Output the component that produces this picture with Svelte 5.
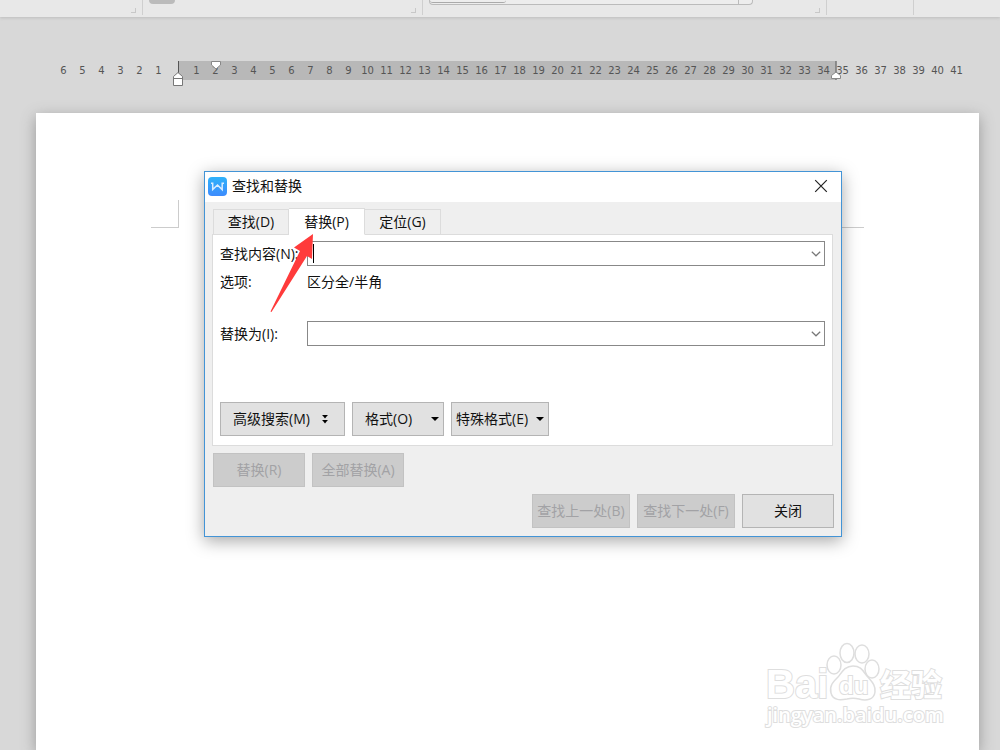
<!-- script -->
<script lang="ts">
  /* constants */
  const rulerBefore: number[] = [6, 5, 4, 3, 2, 1]
  const rulerAfter: number[] = Array.from({ length: 41 }, (_, i) => i + 1)
  const tabs: { id: string, label: string }[] = [
    { id: 'find', label: '查找(D)' },
    { id: 'replace', label: '替换(P)' },
    { id: 'goto', label: '定位(G)' },
  ]
  /* state */
  let activeTab: string = $state('replace')
  let findText: string = $state('')
  let replaceText: string = $state('')
</script>

<!-- snippets -->
{#snippet chevron()}
  <svg width="10" height="6" viewBox="0 0 10 6" aria-hidden="true">
    <path d="M0.8 0.8 L5 4.8 L9.2 0.8" fill="none" stroke="#777" stroke-width="1.2" />
  </svg>
{/snippet}

{#snippet caretDown()}
  <svg width="8" height="4" viewBox="0 0 8 4" aria-hidden="true">
    <path d="M0 0 H8 L4 4 Z" fill="#000" />
  </svg>
{/snippet}

<!-- template -->
<div class="app">
  <header class="ribbon">
    <div class="group"><span class="launcher"></span></div>
    <div class="group">
      <span class="tool"></span>
      <span class="launcher"></span>
    </div>
    <div class="group">
      <div class="gallery">
        <span class="gallery-item"></span>
        <span class="gallery-more"></span>
      </div>
      <span class="launcher"></span>
    </div>
    <div class="group"></div>
    <div class="group"></div>
  </header>

  <main>
    <div class="ruler">
      <div class="ruler-band"></div>
      <div class="ticks">
        {#each rulerBefore as n}
        <span>{n}</span>
        {/each}
        <span></span>
        {#each rulerAfter as n}
        <span>{n}</span>
        {/each}
      </div>
      <svg class="marker indent-left" width="12" height="26" viewBox="0 0 12 26" aria-hidden="true">
        <path d="M6.5 0 V13" stroke="#555" />
        <path d="M1.5 24.5 V15.5 L6 11.5 L10.5 15.5 V24.5 Z M1.5 17.5 H10.5" fill="#fff" stroke="#777" />
      </svg>
      <svg class="marker indent-first" width="12" height="9" viewBox="0 0 12 9" aria-hidden="true">
        <path d="M1.5 0.5 H10.5 V4 L6 8 L1.5 4 Z" fill="#fff" stroke="#888" />
      </svg>
      <svg class="marker indent-right" width="12" height="20" viewBox="0 0 12 20" aria-hidden="true">
        <path d="M6 0 V19" stroke="#777" stroke-width="1.500" />
        <path d="M1.5 17.5 V14.5 L6 11 L10.5 14.5 V17.5 Z" fill="#fff" stroke="#888" />
      </svg>
    </div>

    <article class="page">
      <span class="crop crop-left"></span>
      <span class="crop crop-right"></span>
    </article>
  </main>

  <section class="dialog" role="dialog" aria-labelledby="dialog-title">
    <div class="title-bar">
      <svg width="19" height="19" viewBox="0 0 19 19" aria-hidden="true">
        <defs>
          <linearGradient id="logo" x1="0" y1="0" x2="0" y2="1">
            <stop offset="0" stop-color="#2fb2fa" />
            <stop offset="1" stop-color="#3d8bfd" />
          </linearGradient>
        </defs>
        <rect width="19" height="19" rx="4" fill="url(#logo)" />
        <path d="M3 6.3 H4.7 V12.6 L9.5 8 L14.2 12.6 V6.3 H16" fill="none" stroke="#d8edff" stroke-width="1.500" />
      </svg>
      <h1 id="dialog-title">查找和替换</h1>
      <button class="close" aria-label="关闭窗口">
        <svg width="14" height="14" viewBox="0 0 14 14" aria-hidden="true">
          <path d="M1.2 1.2 L12.8 12.8 M12.8 1.2 L1.2 12.8" stroke="#222" stroke-width="1.2" />
        </svg>
      </button>
    </div>

    <div class="dialog-body">
      <div class="tabs" role="tablist">
        {#each tabs as tab}
        <button
          class="tab"
          class:active={activeTab === tab.id}
          role="tab"
          aria-selected={activeTab === tab.id}
          onclick={() => activeTab = tab.id}
        >{tab.label}</button>
        {/each}
      </div>

      <div class="panel">
        <div class="field">
          <label for="find-text">查找内容(N):</label>
          <div class="combo">
            <input id="find-text" type="text" bind:value={findText} />
            {#if findText === ''}
            <span class="text-cursor"></span>
            {/if}
            <button aria-label="查找记录">{@render chevron()}</button>
          </div>
        </div>
        <div class="field options">
          <span>选项:</span>
          <span>区分全/半角</span>
        </div>
        <div class="field replace-with">
          <label for="replace-text">替换为(I):</label>
          <div class="combo">
            <input id="replace-text" type="text" bind:value={replaceText} />
            <button aria-label="替换记录">{@render chevron()}</button>
          </div>
        </div>
        <div class="row tools">
          <button class="btn advanced">
            高级搜索(M)
            <svg width="6" height="9" viewBox="0 0 6 9" aria-hidden="true">
              <path d="M0.5 0.5 H5.5 M0.5 5.5 H5.5" stroke="#000" />
              <path d="M1 1 H5 L3 3.5 Z M1 6 H5 L3 8.5 Z" fill="#000" />
            </svg>
          </button>
          <button class="btn format">格式(O) {@render caretDown()}</button>
          <button class="btn wide special">特殊格式(E) {@render caretDown()}</button>
        </div>
      </div>

      <div class="row actions">
        <button class="btn" disabled>替换(R)</button>
        <button class="btn" disabled>全部替换(A)</button>
      </div>
      <div class="row actions end">
        <button class="btn wide" disabled>查找上一处(B)</button>
        <button class="btn wide" disabled>查找下一处(F)</button>
        <button class="btn">关闭</button>
      </div>
    </div>

    <svg class="pointer" width="44" height="80" viewBox="0 0 44 80" aria-hidden="true">
      <path d="M43 1 L42 26 L37 23 L1.5 79 L0.5 78.5 L30 18 L24 14.5 Z" fill="#ff3b3b" />
    </svg>
  </section>

  <svg class="watermark" width="190" height="96" viewBox="0 0 190 96" aria-label="Baidu 经验">
    <g fill="#fff" stroke="#dedede" stroke-width="1.500">
      <ellipse cx="72" cy="25" rx="7" ry="9" />
      <ellipse cx="85" cy="13" rx="7" ry="9.500" />
      <ellipse cx="100" cy="14" rx="7" ry="9" />
      <ellipse cx="110" cy="29" rx="7" ry="9" />
      <path d="M91 26 C83 26 80 32 76 37 C71 42 67 46 69 53 C71 61 79 60 85 59 C89 58 93 58 97 59 C104 61 112 60 113 52 C114 45 109 41 105 36 C101 31 99 26 91 26 Z" />
    </g>
    <text class="mark brand" x="4" y="58">Bai</text>
    <text class="mark du" x="77" y="54">du</text>
    <text class="mark cjk" x="118" y="56">经验</text>
    <text class="mark url" x="5" y="82">jingyan.baidu.com</text>
  </svg>
</div>

<!-- style -->
<style>
  :global(body) {
    /* margins */
    margin: 0;
    /* color */
    background-color: #d8d8d8;
  }
  .app {
    /* size */
    min-height: 100vh;
    box-sizing: border-box;
    /* position */
    position: relative;
    overflow: hidden;
    /* flex */
    display: flex;
    flex-direction: column;
    /* fonts */
    font-family: "Open Sans", "Noto Sans CJK SC", sans-serif;
    font-size: 14px;
    line-height: 20px;
    /* color */
    color: #111;
  }
  .ribbon {
    /* size */
    height: 17px;
    /* grid */
    display: grid;
    grid-template-columns: 143px 280px 404px 87px 1fr;
    /* color */
    background-color: #e8e8e8;
    box-shadow: 0 1px 3px #bdbdbd;
  }
  .group {
    /* size */
    height: 15px;
    box-sizing: border-box;
    /* flex */
    display: flex;
    align-items: flex-start;
    /* margins */
    padding: 0 6px 2px;
    /* color */
    border-right: 1px solid #cfcfcf;
  }
  .group:last-child {
    border-right: none;
  }
  .launcher {
    /* size */
    width: 4px;
    height: 4px;
    /* flex */
    margin-left: auto;
    align-self: flex-end;
    /* color */
    border-right: 1px solid #c8c8c8;
    border-bottom: 1px solid #c8c8c8;
  }
  .tool {
    /* size */
    width: 26px;
    height: 4px;
    /* color */
    background-color: #bbb;
    border-radius: 0 0 4px 4px;
  }
  .gallery {
    /* size */
    width: 324px;
    height: 5px;
    box-sizing: border-box;
    /* flex */
    display: flex;
    justify-content: space-between;
    /* color */
    background-color: #ededed;
    border: 1px solid #bbb;
    border-top: none;
    border-radius: 0 0 4px 4px;
  }
  .gallery-item {
    /* size */
    width: 76px;
    height: 2px;
    /* color */
    border-bottom: 1px solid #aaa;
    border-radius: 0 0 3px 3px;
  }
  .gallery-more {
    /* size */
    width: 13px;
    /* color */
    border-left: 1px solid #bbb;
  }
  main {
    /* flex */
    flex: 1;
    display: flex;
    flex-direction: column;
    /* margins */
    padding-top: 44px;
  }
  .ruler {
    /* size */
    height: 19px;
    /* position */
    position: relative;
    /* margins */
    margin-left: 54px;
  }
  .ruler-band {
    /* size */
    width: 657px;
    height: 19px;
    /* position */
    position: absolute;
    left: 125px;
    /* color */
    background-color: #b8b8b8;
  }
  .ticks {
    /* position */
    position: relative;
    /* grid */
    display: grid;
    grid-auto-flow: column;
    grid-auto-columns: 19px;
    /* fonts */
    font-family: "DejaVu Sans", sans-serif;
    font-size: 10px;
    line-height: 19px;
    text-align: center;
    /* color */
    color: #555;
  }
  .marker {
    position: absolute;
    top: 0;
  }
  .indent-left {
    left: 118px;
  }
  .indent-first {
    left: 156px;
  }
  .indent-right {
    left: 776px;
  }
  .page {
    /* flex */
    flex: 1;
    display: flex;
    justify-content: space-between;
    align-items: flex-start;
    /* margins */
    margin: 33px 21px 0 36px;
    padding: 87px 115px 0;
    /* color */
    background-color: #fff;
    box-shadow: 0 4px 14px #999;
  }
  .crop {
    /* size */
    width: 27px;
    height: 27px;
    /* color */
    border-bottom: 1px solid #ccc;
  }
  .crop-left {
    border-right: 1px solid #ccc;
  }
  .crop-right {
    border-left: 1px solid #ccc;
  }
  .dialog {
    /* size */
    width: 638px;
    box-sizing: border-box;
    /* position */
    position: absolute;
    left: 204px;
    top: 171px;
    /* color */
    background-color: #efefef;
    border: 1px solid #4394d6;
    box-shadow: 0 4px 16px rgba(0, 0, 0, 0.35);
  }
  .title-bar {
    /* size */
    height: 28px;
    /* flex */
    display: flex;
    align-items: center;
    column-gap: 5px;
    /* margins */
    padding: 0 3px 2px;
    /* color */
    background-color: #fff;
  }
  h1 {
    /* margins */
    margin: 0;
    /* fonts */
    font-size: 14px;
    font-weight: 400;
  }
  button {
    /* margins */
    margin: 0;
    padding: 0;
    /* fonts */
    font: inherit;
    color: inherit;
  }
  .close {
    /* size */
    width: 34px;
    height: 28px;
    /* flex */
    display: flex;
    justify-content: center;
    align-items: center;
    margin-left: auto;
    /* color */
    background: none;
    border: none;
  }
  .dialog-body {
    padding: 6px 7px 8px;
  }
  .tabs {
    /* flex */
    display: flex;
    align-items: flex-end;
    /* margins */
    padding-left: 1px;
  }
  .tab {
    /* size */
    width: 76px;
    height: 26px;
    /* color */
    background-color: #efefef;
    border: 1px solid #dcdcdc;
    border-left-width: 0;
  }
  .tab:first-child {
    border-left-width: 1px;
  }
  .tab.active {
    /* size */
    height: 27px;
    /* position */
    position: relative;
    /* color */
    background-color: #fff;
    border-bottom-color: #fff;
  }
  .panel {
    /* margins */
    margin: -1px 1px 0 0;
    padding: 6px 7px 9px;
    /* color */
    background-color: #fff;
    border: 1px solid #dcdcdc;
  }
  .field {
    /* grid */
    display: grid;
    grid-template-columns: 87px 1fr;
    align-items: center;
  }
  .options {
    margin-top: 6px;
  }
  .replace-with {
    margin-top: 29px;
  }
  .combo {
    /* size */
    height: 25px;
    box-sizing: border-box;
    /* position */
    position: relative;
    /* flex */
    display: flex;
    /* color */
    border: 1px solid #888;
  }
  .combo input {
    /* flex */
    flex: 1;
    min-width: 0;
    /* margins */
    padding: 0 5px;
    /* fonts */
    font: inherit;
    /* color */
    border: none;
    outline: none;
    background: none;
  }
  .combo button {
    /* size */
    width: 16px;
    /* flex */
    display: flex;
    justify-content: center;
    align-items: center;
    /* color */
    background: none;
    border: none;
  }
  .text-cursor {
    /* size */
    width: 1px;
    height: 19px;
    /* position */
    position: absolute;
    left: 5px;
    top: 2px;
    /* color */
    background-color: #000;
  }
  .row {
    /* flex */
    display: flex;
    column-gap: 7px;
  }
  .tools {
    margin-top: 56px;
  }
  .actions {
    /* margins */
    margin-top: 7px;
    padding-left: 1px;
  }
  .end {
    justify-content: flex-end;
  }
  .btn {
    /* size */
    width: 92px;
    height: 34px;
    /* flex */
    display: flex;
    justify-content: center;
    align-items: center;
    /* fonts */
    white-space: nowrap;
    /* color */
    background-color: #e1e1e1;
    border: 1px solid #b4b4b4;
  }
  .btn:disabled {
    /* color */
    color: #a2a2a5;
    background-color: #ccc;
    border-color: #c2c2c2;
  }
  .wide {
    width: 98px;
  }
  .advanced {
    /* size */
    width: 125px;
    /* flex */
    justify-content: space-between;
    /* margins */
    padding: 0 16px 0 12px;
  }
  .format {
    /* flex */
    justify-content: space-between;
    /* margins */
    padding: 0 4px 0 12px;
  }
  .special {
    /* flex */
    justify-content: space-between;
    /* margins */
    padding: 0 4px;
  }
  .pointer {
    position: absolute;
    left: 65px;
    top: 61px;
  }
  .watermark {
    position: absolute;
    right: 48px;
    bottom: 14px;
  }
  .mark {
    fill: #fff;
    stroke: #dedede;
    stroke-width: 2px;
    paint-order: stroke;
    font-weight: 700;
  }
  .brand {
    font-family: "Liberation Sans", sans-serif;
    font-size: 40px;
  }
  .du {
    font-family: "Liberation Sans", sans-serif;
    font-size: 24px;
  }
  .cjk {
    font-family: "Noto Sans CJK SC", sans-serif;
    font-size: 31px;
  }
  .url {
    font-family: "Open Sans", sans-serif;
    font-size: 20px;
    font-weight: 600;
  }
</style>
